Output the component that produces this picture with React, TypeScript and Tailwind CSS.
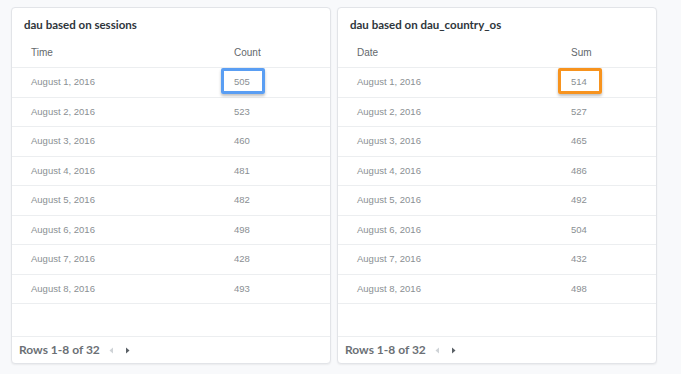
import React from 'react';

// Two Metabase-style table cards, side by side

type Card = {
  title: string;
  cols: [string, string];
  colWidth: string; // grid template for the two columns
  rows: [string, string][];
  highlight: string; // border colour class for the first value
};

const dates = [
  'August 1, 2016',
  'August 2, 2016',
  'August 3, 2016',
  'August 4, 2016',
  'August 5, 2016',
  'August 6, 2016',
  'August 7, 2016',
  'August 8, 2016',
];

const zip = (vals: string[]): [string, string][] => dates.map((d, i) => [d, vals[i]]);

const cards: Card[] = [
  {
    title: 'dau based on sessions',
    cols: ['Time', 'Count'],
    colWidth: 'grid-cols-[203px_1fr]',
    rows: zip(['505', '523', '460', '481', '482', '498', '428', '493']),
    highlight: 'border-[#5a9ef3]',
  },
  {
    title: 'dau based on dau_country_os',
    cols: ['Date', 'Sum'],
    colWidth: 'grid-cols-[214px_1fr]',
    rows: zip(['514', '527', '465', '486', '492', '504', '432', '498']),
    highlight: 'border-[#f7931e]',
  },
];

const TableCard = ({ card }: { card: Card }) => (
  <div className="flex h-[357px] w-[320px] flex-col rounded-[4px] border border-[#e2e4e8] bg-white shadow-[0_1px_2px_rgba(0,0,0,0.06)]">
    {/* Title */}
    <div className="px-[12px] pt-[10px] text-[11.5px] font-bold leading-[14px] text-[#2e353b] [font-family:Lato,'Noto_Sans',sans-serif]">
      {card.title}
    </div>

    {/* Header */}
    <div
      className={`mt-[6px] grid h-[30px] items-center border-b border-[#eceef0] px-[19px] text-[10px] text-[#63686c] [font-family:'Liberation_Sans',Arial,sans-serif] ${card.colWidth}`}
    >
      <span>{card.cols[0]}</span>
      <span>{card.cols[1]}</span>
    </div>

    {/* Rows */}
    {card.rows.map(([d, v], i) => (
      <div
        key={d}
        className={`grid h-[29.5px] items-center border-b border-[#eceef0] px-[19px] text-[9.5px] text-[#8a8f93] [font-family:'Liberation_Sans',Arial,sans-serif] ${card.colWidth}`}
      >
        <span>{d}</span>
        <span className="relative">
          {v}
          {i === 0 && (
            <span
              className={`absolute left-[-13px] top-[-7px] h-[26px] w-[44px] rounded-[2px] border-[3px] shadow-[0_2px_3px_rgba(0,0,0,0.25)] ${card.highlight}`}
            />
          )}
        </span>
      </div>
    ))}

    <div className="flex-1" />

    {/* Footer */}
    <div className="flex h-[27px] items-center gap-[8px] border-t border-[#eceef0] px-[7px]">
      <span className="text-[12px] font-bold text-[#6b7075] [font-family:Lato,'Noto_Sans',sans-serif]">
        Rows 1-8 of 32
      </span>
      <svg width="6" height="7" viewBox="0 0 6 7">
        <path d="M5 0.5 L1.5 3.5 L5 6.5 Z" fill="#cfd3d7" />
      </svg>
      <svg width="6" height="7" viewBox="0 0 6 7" className="ml-[3px]">
        <path d="M1 0.5 L4.5 3.5 L1 6.5 Z" fill="#5a6066" />
      </svg>
    </div>
  </div>
);

export default function App() {
  return (
    <div className="h-[374px] w-[681px] bg-[#f8f9fb] pl-[11px] pt-[7px]">
      <div className="flex gap-[6px]">
        {cards.map((c) => (
          <TableCard key={c.title} card={c} />
        ))}
      </div>
    </div>
  );
}
